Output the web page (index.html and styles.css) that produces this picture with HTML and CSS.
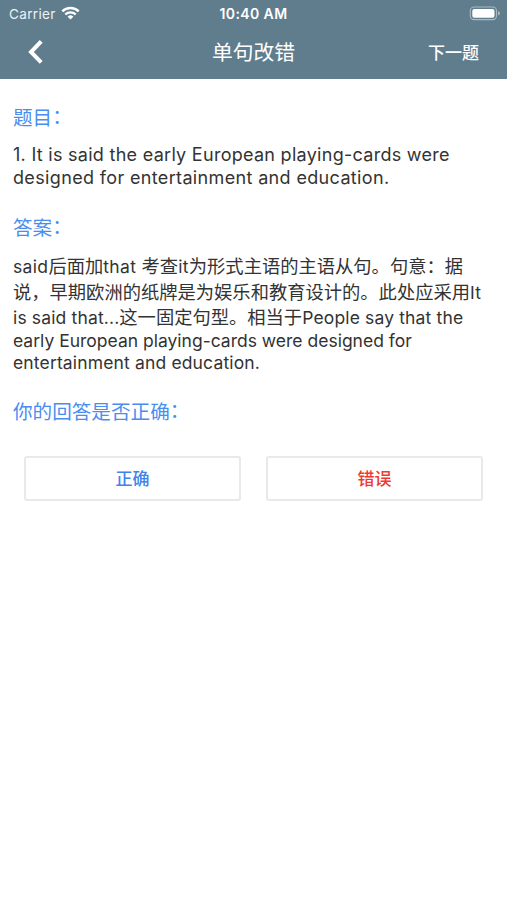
FILE: index.html
```html
<!DOCTYPE html>
<html lang="zh-CN">
<head>
<meta charset="utf-8">
<title>单句改错</title>
<link rel="stylesheet" href="styles.css">
</head>
<body>
<header class="top">
  <div class="status">
    <div class="carrier"><span>Carrier</span>
      <svg class="wifi" viewBox="0 0 19 14" width="19" height="14" fill="none" stroke="#fff" stroke-width="2.4"><path d="M1.3 5.3a11.7 11.7 0 0 1 16.4 0M4.3 8.5a7.4 7.4 0 0 1 10.4 0"/><path d="M9.5 13.6 6.6 10.7a4.1 4.1 0 0 1 5.8 0Z" fill="#fff" stroke="none"/></svg>
    </div>
    <div class="time">10:40 AM</div>
    <svg class="battery" viewBox="0 0 32 15" width="32" height="15"><rect x="1.3" y="1" width="26.2" height="12.6" rx="3.8" fill="none" stroke="#a9bac3" stroke-width="1.1"/><rect x="3.3" y="3" width="22.2" height="8.8" rx="2" fill="#fff"/><path d="M29 5.2q2 .7 2 2.1t-2 2.1Z" fill="#a9bac3"/></svg>
  </div>
  <nav class="nav">
    <svg class="back" viewBox="0 0 16 26" width="16" height="26" fill="none" stroke="#fff" stroke-width="4"><path d="M14.2 2.4 4 13 14.2 23.4"/></svg>
    <h1>单句改错</h1>
    <span class="next">下一题</span>
  </nav>
</header>
<main>
  <h2>题目<span class="colon">：</span></h2>
  <p class="question"><span class="line">1. It is said the early European playing-cards were</span><span class="line loose">designed for entertainment and education.</span></p>
  <h2>答案<span class="colon">：</span></h2>
  <p class="answer"><span class="line cjk loose">said<span class="han">后面加</span>that <span class="han">考查</span>it<span class="han">为形式主语的主语从句。句意：据</span></span><span class="line cjk"><span class="han">说，早期欧洲的纸牌是为娱乐和教育设计的。此处应采用</span>It</span><span class="line cjk">is said that...<span class="han">这一固定句型。相当于</span>People say that the</span><span class="line tight">early European playing-cards were designed for</span><span class="line">entertainment and education.</span></p>
  <h2>你的回答是否正确<span class="colon">：</span></h2>
  <div class="choices">
    <button class="right">正确</button>
    <button class="wrong">错误</button>
  </div>
</main>
</body>
</html>
```

FILE: styles.css
```css
* { box-sizing: border-box; }
body {
  margin: 0;
  background: #fff;
  color: #333;
  font-family: Inter, "Noto Sans CJK SC", sans-serif;
}
.top { height: 79px; background: #607d8d; color: #fff; }
.status {
  display: grid;
  grid-template-columns: 1fr auto 1fr;
  align-items: center;
  height: 27px;
  padding: 0 6px 0 9px;
}
.carrier { display: flex; align-items: center; gap: 5px; font-size: 13.5px; letter-spacing: .35px; color: #edf2f5; }
.wifi { margin-top: -2px; }
.time { margin-left: -3px; font-size: 14px; font-weight: 600; letter-spacing: .4px; }
.battery { justify-self: end; }
.nav {
  display: grid;
  grid-template-columns: 1fr auto 1fr;
  align-items: center;
  height: 50px;
  padding: 0 28px 0 27px;
}
h1 { margin: 2px 0 0 1px; font-size: 20.8px; font-weight: 400; line-height: 30px; }
.next { justify-self: end; margin-top: -1px; font-size: 17px; font-weight: 500; }
main { padding: 24px 13px; }
h2 { display: flex; margin: 0; color: #4a8df0; font-size: 19.6px; font-weight: 400; line-height: 30px; }
.colon { margin-top: -1px; }
p { margin: 0; white-space: nowrap; }
.line { display: block; }
.question { margin: 10px 0 24px; font-size: 18px; line-height: 23px; letter-spacing: .28px; }
.loose { letter-spacing: .35px; }
.answer { margin: 10px 0 23.5px; font-size: 17.5px; line-height: 22px; letter-spacing: .15px; }
.cjk { height: 25.5px; line-height: 26px; }
.han { font-size: 18.3px; letter-spacing: 0; }
.tight { letter-spacing: 0; }
.choices { display: grid; grid-template-columns: 1fr 1fr; gap: 25px; padding: 28.5px 11px 0; }
button {
  height: 45px;
  padding: 0 0 1px;
  border: 2px solid #e9e9e9;
  border-radius: 3px;
  background: #fff;
  font: 500 17px Inter, "Noto Sans CJK SC", sans-serif;
}
.right { color: #4083ed; }
.wrong { color: #ee3a33; }
```
